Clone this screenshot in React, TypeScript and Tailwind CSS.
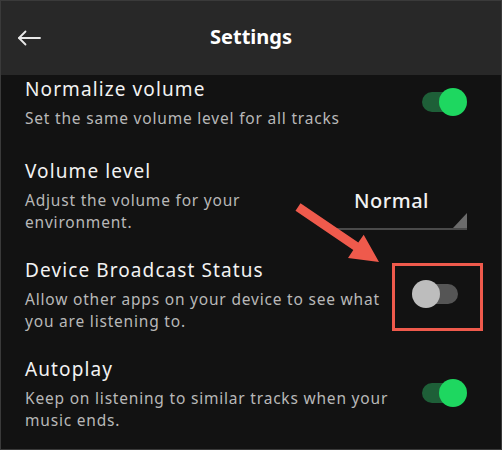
import React from 'react';

const font = { fontFamily: '"Noto Sans", "Liberation Sans", sans-serif' };

function Toggle({ on }: { on: boolean }) {
  return (
    <div className="relative w-[55px] h-[29px] shrink-0">
      <div
        className={`absolute left-[10px] top-[4px] w-[36px] h-[20px] rounded-full ${
          on ? 'bg-[#1e5f38]' : 'bg-[#555555]'
        }`}
      />
      <div
        className={`absolute top-0 w-[28px] h-[28px] rounded-full ${
          on ? 'right-0 bg-[#1ed760]' : 'left-0 bg-[#bdbdbd]'
        }`}
      />
    </div>
  );
}

function Row({
  title,
  lines,
  right,
  className,
}: {
  title: string;
  lines: string[];
  right: React.ReactNode;
  className?: string;
}) {
  return (
    <div className={`flex items-center justify-between pl-[24px] pr-[34px] ${className ?? ''}`}>
      <div>
        <div className="text-[19px] leading-[28px] tracking-[1.1px] text-[#f2f2f2]">{title}</div>
        <div className="mt-[4px] text-[15.5px] leading-[22px] tracking-[0.8px] text-[#b8b8b8]">
          {lines.map((l) => (
            <div key={l} className="whitespace-nowrap">{l}</div>
          ))}
        </div>
      </div>
      {right}
    </div>
  );
}

function Dropdown() {
  return (
    <div className="self-end mb-[3px] w-[134px] flex items-end border-b-2 border-[#4a4a4a]">
      <div className="flex-1 text-center text-[20px] leading-[30px] font-medium tracking-[0.5px] text-[#f2f2f2] pb-[12px] pr-[3px]">
        Normal
      </div>
      <svg width="14" height="15" viewBox="0 0 14 15" className="block">
        <polygon points="0,15 14,15 14,0" fill="#6b6b6b" />
      </svg>
    </div>
  );
}

export default function App() {
  return (
    <div
      className="relative w-[502px] h-[450px] overflow-hidden bg-[#121212] border border-[#3a3a3a]"
      style={font}
    >
      {/* Header */}
      <header className="h-[74px] bg-[#282828] flex items-center">
        <div className="w-[40px] pl-[16px] flex items-center">
          <svg width="24" height="16" viewBox="0 0 24 16" fill="none" stroke="#e8e8e8" strokeWidth="1.8" strokeLinecap="round" strokeLinejoin="round">
            <path d="M23 8H2" />
            <path d="M8.5 1.5L2 8l6.5 6.5" />
          </svg>
        </div>
        <div className="flex-1 text-center text-[20px] font-bold text-white mb-[2px]">Settings</div>
        <div className="w-[40px]" />
      </header>

      <Row
        title="Normalize volume"
        lines={['Set the same volume level for all tracks']}
        right={<Toggle on />}
      />
      <Row
        className="mt-[28px] items-stretch"
        title="Volume level"
        lines={['Adjust the volume for your', 'environment.']}
        right={<Dropdown />}
      />
      <Row
        className="mt-[23px]"
        title="Device Broadcast Status"
        lines={['Allow other apps on your device to see what', 'you are listening to.']}
        right={<Toggle on={false} />}
      />
      <Row
        className="mt-[23px]"
        title="Autoplay"
        lines={['Keep on listening to similar tracks when your', 'music ends.']}
        right={<Toggle on />}
      />

      {/* Annotation overlay */}
      <div className="absolute left-[391px] top-[262px] w-[91px] h-[68px] border-[3px] border-[#ef5a4c]" />
      <svg className="absolute left-0 top-0 pointer-events-none" width="502" height="450" viewBox="0 0 502 450">
        <polygon
          points="299.5,202.3 357.3,241.6 362.7,233.7 378,261 347,256.9 352.3,249 294.5,209.7"
          fill="#ef5a4c"
        />
      </svg>
    </div>
  );
}
